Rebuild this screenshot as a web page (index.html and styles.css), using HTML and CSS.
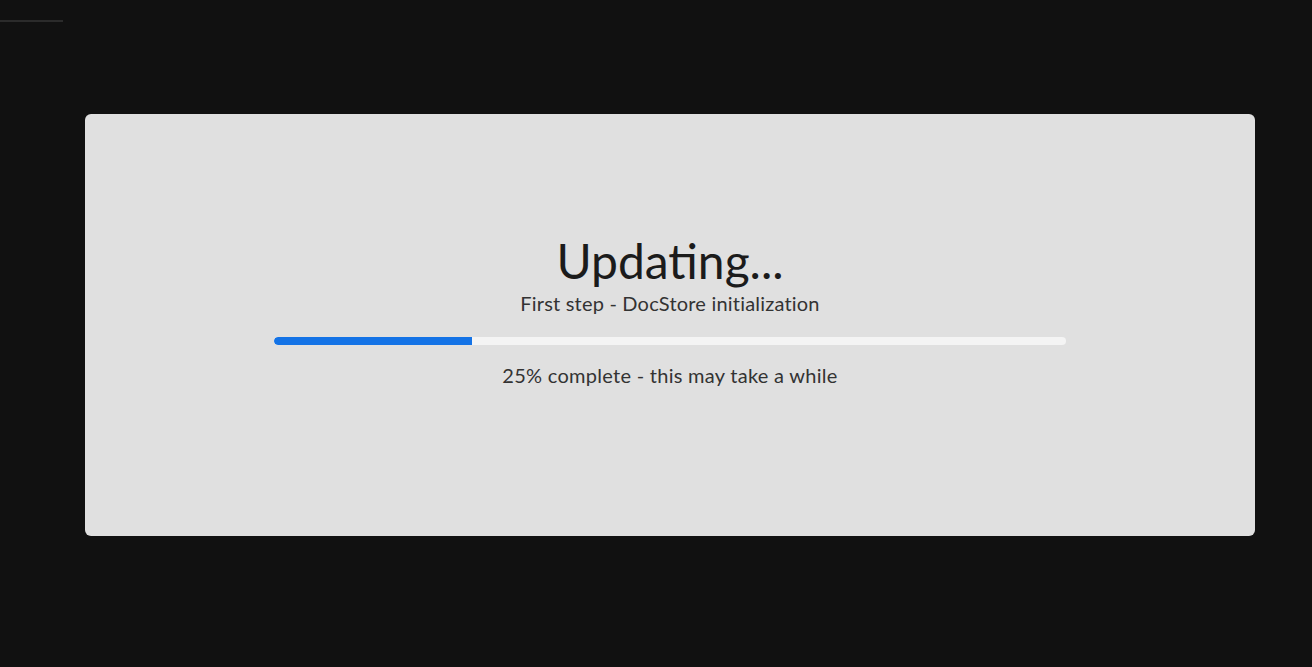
FILE: index.html
```html
<!DOCTYPE html>
<html lang="en">
<head>
    <meta charset="UTF-8">
    <meta name="viewport" content="width=device-width, initial-scale=1.0">
    <title>Updating</title>
    <link rel="stylesheet" href="styles.css">
</head>
<body>
    <div class="tab-bar">
        <div class="tab active"></div>
    </div>

    <div class="update-card">
        <h1 class="update-title">Updating...</h1>
        <p class="update-step">First step - DocStore initialization</p>
        <div class="progress-track">
            <div class="progress-fill" style="width: 25%"></div>
        </div>
        <p class="update-status">25% complete - this may take a while</p>
    </div>
</body>
</html>
```

FILE: styles.css
```css
* {
    margin: 0;
    padding: 0;
    box-sizing: border-box;
    font-family: Lato, "Noto Sans", sans-serif;
}

body {
    background-color: #111111;
    min-height: 100vh;
    padding: 0 57px 0 85px;
}

.tab-bar {
    height: 114px;
    margin-left: -85px;
}

.tab {
    width: 63px;
    height: 22px;
}

.tab.active {
    border-bottom: 2px solid #2b2b2b;
}

.update-card {
    background-color: #e0e0e0;
    border-radius: 6px;
    height: 422px;
    display: flex;
    flex-direction: column;
    align-items: center;
    padding-top: 119px;
}

.update-title {
    color: #1b1b1b;
    font-size: 48px;
    font-weight: 400;
    line-height: 56px;
}

.update-step {
    color: #333;
    font-size: 20px;
    line-height: 24px;
    letter-spacing: 0.2px;
    margin-top: 2px;
}

.progress-track {
    width: 792px;
    height: 8px;
    background-color: #f4f4f4;
    border-radius: 4px;
    overflow: hidden;
    margin: 22px 0 18px;
}

.progress-fill {
    height: 100%;
    background-color: #1473e6;
    border-radius: 4px 0 0 4px;
}

.update-status {
    color: #333;
    font-size: 20px;
    line-height: 24px;
    letter-spacing: 0.28px;
}
```
